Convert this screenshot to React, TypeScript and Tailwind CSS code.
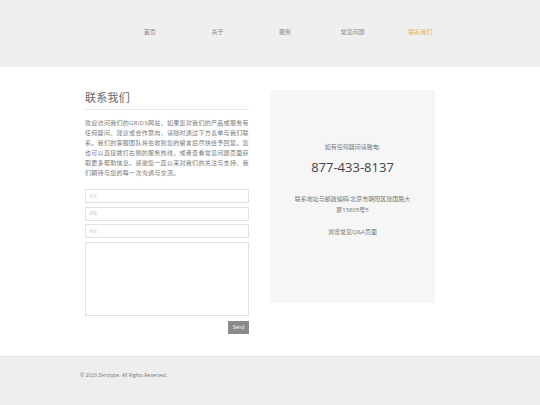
import React from 'react';

const font = { fontFamily: '"Open Sans", "Noto Sans CJK SC", sans-serif' };

const navItems = ['首页', '关于', '服务', '常见问题', '联系我们'];

export default function App() {
  return (
    <div className="w-[540px] h-[405px] flex flex-col bg-white overflow-hidden" style={font}>
      {/* Header */}
      <header className="h-[67px] shrink-0 bg-[#efefef] flex items-center">
        <nav className="ml-[116px] w-[338px] flex -mt-[3px]">
          {navItems.map((item, i) => (
            <a
              key={item}
              className={`flex-1 text-center text-[6px] leading-none ${
                i === navItems.length - 1 ? 'text-[#e8b04a]' : 'text-[#888]'
              }`}
            >
              {item}
            </a>
          ))}
        </nav>
      </header>

      {/* Content */}
      <main className="flex-1 pt-[23px]">
        <div className="ml-[85px] w-[350px] flex gap-[21px]">
          {/* Left column */}
          <div className="w-[164px] shrink-0">
            <h1 className="text-[11px] leading-[16px] text-[#666] tracking-wide pb-[3px] border-b border-[#e8e8e8]">
              联系我们
            </h1>
            <p className="mt-[8px] text-[6px] leading-[10px] text-[#777] tracking-[0.3px]">
              欢迎访问我们的GRIDS网站，如果您对我们的产品或服务有任何疑问、建议或合作意向，请随时通过下方表单与我们联系。我们的客服团队将在收到您的留言后尽快给予回复。您也可以直接拨打右侧的服务热线，或者查看常见问题页面获取更多帮助信息。感谢您一直以来对我们的关注与支持，我们期待与您的每一次沟通与交流。
            </p>
            <form className="mt-[11px] flex flex-col gap-[3.5px]">
              {['姓名', '邮箱', '电话'].map((p) => (
                <input
                  key={p}
                  placeholder={p}
                  className="h-[14px] w-full border border-[#e2e2e2] bg-white px-[3px] text-[4px] placeholder:text-[#ccc] outline-none"
                />
              ))}
              <textarea className="h-[74px] w-full border border-[#e2e2e2] bg-white resize-none outline-none" />
              <div className="flex justify-end mt-[1.5px]">
                <button
                  type="button"
                  className="w-[21px] h-[13px] bg-[#8a8a8a] text-white text-[5px] leading-none"
                >
                  Send
                </button>
              </div>
            </form>
          </div>

          {/* Right column */}
          <div className="w-[165px] h-[213px] bg-[#f6f6f6] flex flex-col items-center text-center px-[22px]">
            <p className="mt-[53px] text-[6px] leading-[8px] text-[#777]">如有任何疑问请致电:</p>
            <p className="mt-[7px] text-[13px] leading-[18px] text-[#444]">877-433-8137</p>
            <p className="mt-[18px] text-[6px] leading-[11px] text-[#777]">
              联系地址与邮政编码:北京市朝阳区建国路大厦15805号5
            </p>
            <p className="mt-[12px] text-[6px] leading-[8px] text-[#777]">浏览常见Q&amp;A页面</p>
          </div>
        </div>
      </main>

      {/* Footer */}
      <footer className="h-[49px] shrink-0 bg-[#eeeeee] border-t border-[#dedede] flex items-center">
        <p className="ml-[80px] text-[5px] text-[#777] -mt-[11px]">© 2023 Zerotype. All Rights Reserved.</p>
      </footer>
    </div>
  );
}
